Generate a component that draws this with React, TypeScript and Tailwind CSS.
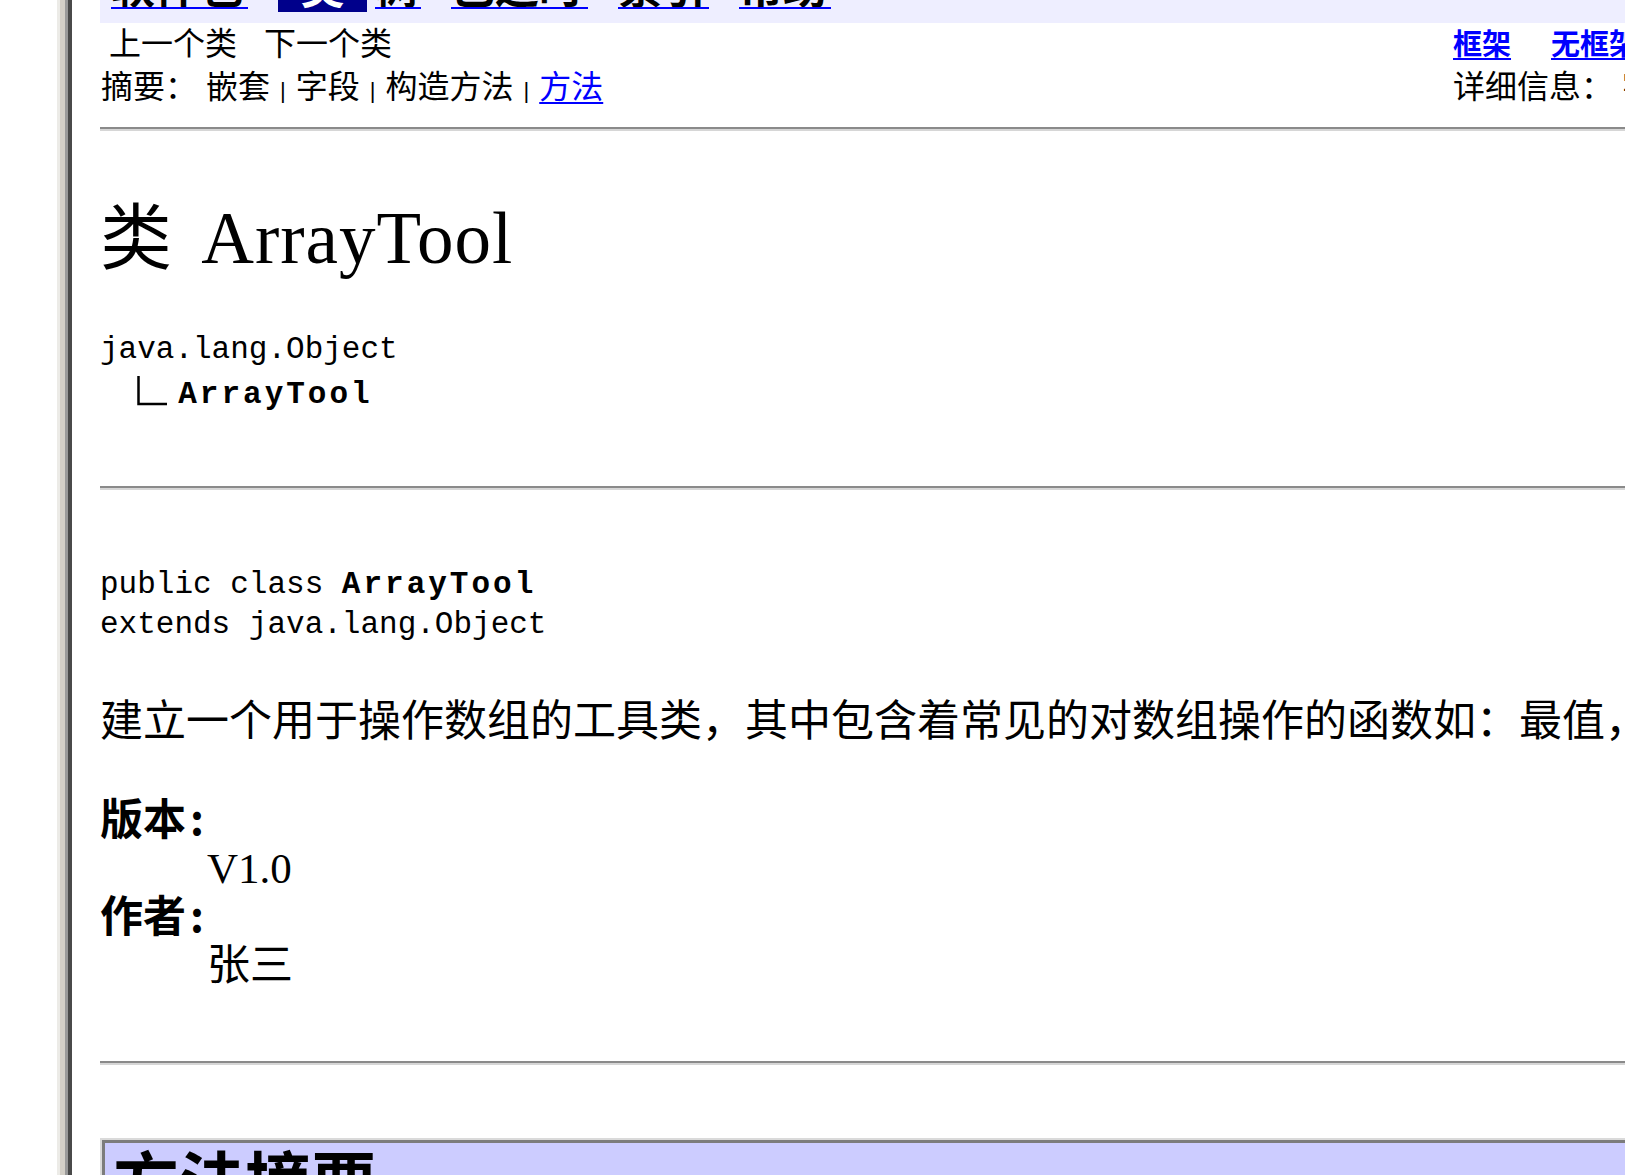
import type { ReactNode } from 'react'

function NavLink({ className, children }: { className: string; children: ReactNode }) {
  return (
    <a className={`block h-[9px] shrink-0 overflow-hidden border-b-2 border-[#0000ff] ${className}`}>
      <span className="-mt-[37px] block whitespace-nowrap text-[44px] font-bold leading-[44px]">{children}</span>
    </a>
  )
}

function Sep() {
  return <span className="mx-[10px] font-['Liberation_Sans',sans-serif] text-[22px]">|</span>
}

function Inherit() {
  // inherit.gif: 小的拐角线
  return (
    <svg width="30" height="30" viewBox="0 0 30 30" className="inline-block align-[-3px]">
      <path d="M1.5 0V28H30" fill="none" stroke="#000" strokeWidth="2.5" />
    </svg>
  )
}

export default function App() {
  return (
    <div className="flex h-[1175px] w-[1625px] overflow-hidden bg-white text-black">
      <div className="w-[57px] shrink-0 bg-white" />
      {/* 框架分隔条 */}
      <div className="w-[3px] shrink-0 bg-[#ecebe7]" />
      <div className="w-[5px] shrink-0 bg-[#d4d0c8]" />
      <div className="w-[3px] shrink-0 bg-[#9a9a9a]" />
      <div className="w-[4px] shrink-0 bg-[#4a4a4a]" />

      <main className="min-w-0 flex-1 overflow-hidden pl-[28px] font-['Noto_Sans_CJK_SC',sans-serif]">
        {/* 顶部导航 */}
        <div className="h-[23px] bg-[#eeeeff]">
          <div className="flex items-start">
            <NavLink className="ml-[11px] w-[137px]">软件包</NavLink>
            <span className="ml-[30px] flex h-[12px] w-[89px] shrink-0 justify-center overflow-hidden bg-[#00008b] text-white">
              <span className="-mt-[37px] block text-[44px] font-bold leading-[44px]">类</span>
            </span>
            <NavLink className="ml-[8px] w-[46px]">树</NavLink>
            <NavLink className="ml-[30px] w-[137px]">已过时</NavLink>
            <NavLink className="ml-[30px] w-[91px]">索引</NavLink>
            <NavLink className="ml-[30px] w-[92px]">帮助</NavLink>
          </div>
        </div>

        <div className="flex h-[36px] items-baseline text-[32px] leading-[36px]">
          <div className="w-[1353px] shrink-0 whitespace-nowrap pl-[9px]">
            上一个类<span className="ml-[27px]">下一个类</span>
          </div>
          <div className="whitespace-nowrap text-[29px] font-bold text-[#0000ff]">
            <a className="underline decoration-2 underline-offset-[3px]">框架</a>
            <a className="ml-[40px] underline decoration-2 underline-offset-[3px]">无框架</a>
          </div>
        </div>

        <div className="flex h-[50px] items-baseline text-[32px] leading-[50px]">
          <div className="w-[1353px] shrink-0 whitespace-nowrap pl-[1px]">
            摘要：<span className="ml-[9px]">嵌套</span>
            <Sep />
            字段
            <Sep />
            构造方法
            <Sep />
            <a className="text-[#0000ff] underline decoration-2 underline-offset-[4px]">方法</a>
          </div>
          <div className="whitespace-nowrap">
            详细信息：<span className="ml-[9px]">字段</span>
            <Sep />
            构造方法
            <Sep />
            方法
          </div>
        </div>

        <div className="mt-[18px] h-[4px] border-y-2 border-t-[#8a8a8a] border-b-[#d6d6d6]" />

        <h2 className="mt-[56px] h-[96px] whitespace-nowrap text-[72px] font-normal leading-[90px]">
          类<span className="ml-[10px] font-['Liberation_Serif',serif] text-[73px] tracking-[1px]"> ArrayTool</span>
        </h2>

        <div className="mt-[44px] whitespace-pre font-['Liberation_Mono',monospace] text-[31px] leading-[45px]">
          <div>java.lang.Object</div>
          <div>
            {'  '}
            <Inherit />
            <b className="ml-[11px] tracking-[3px]">ArrayTool</b>
          </div>
        </div>

        <div className="mt-[69px] h-[4px] border-y-2 border-t-[#8a8a8a] border-b-[#d6d6d6]" />

        <div className="mt-[75px] whitespace-pre font-['Liberation_Mono',monospace] text-[31px] leading-[40px]">
          <div>
            public class <b className="tracking-[3px]">ArrayTool</b>
          </div>
          <div>extends java.lang.Object</div>
        </div>

        <p className="mt-[48px] whitespace-nowrap text-[43px] leading-[48px]">
          建立一个用于操作数组的工具类，其中包含着常见的对数组操作的函数如：最值，排序等。
        </p>

        <dl className="mt-[51px] text-[43px] leading-[48px]">
          <dt className="font-bold">
            版本<span className="ml-[4px]">:</span>
          </dt>
          <dd className="ml-[107px]">
            <span className="font-['Liberation_Serif',serif] leading-[40px]">V1.0</span>
          </dd>
          <dt className="font-bold">
            作者<span className="ml-[4px]">:</span>
          </dt>
          <dd className="ml-[107px]">张三</dd>
        </dl>

        <div className="mt-[76px] h-[4px] border-y-2 border-t-[#8a8a8a] border-b-[#d6d6d6]" />

        {/* 方法摘要表头 */}
        <div className="mt-[73px] border-l-2 border-t-2 border-[#dadada]">
          <div className="border-l-[3px] border-t-[3px] border-[#7c7c7c] bg-[#ccccff] pl-[8px] pt-[2px]">
            <div className="whitespace-nowrap text-[66px] font-bold leading-[66px]">方法摘要</div>
          </div>
        </div>
      </main>
    </div>
  )
}
